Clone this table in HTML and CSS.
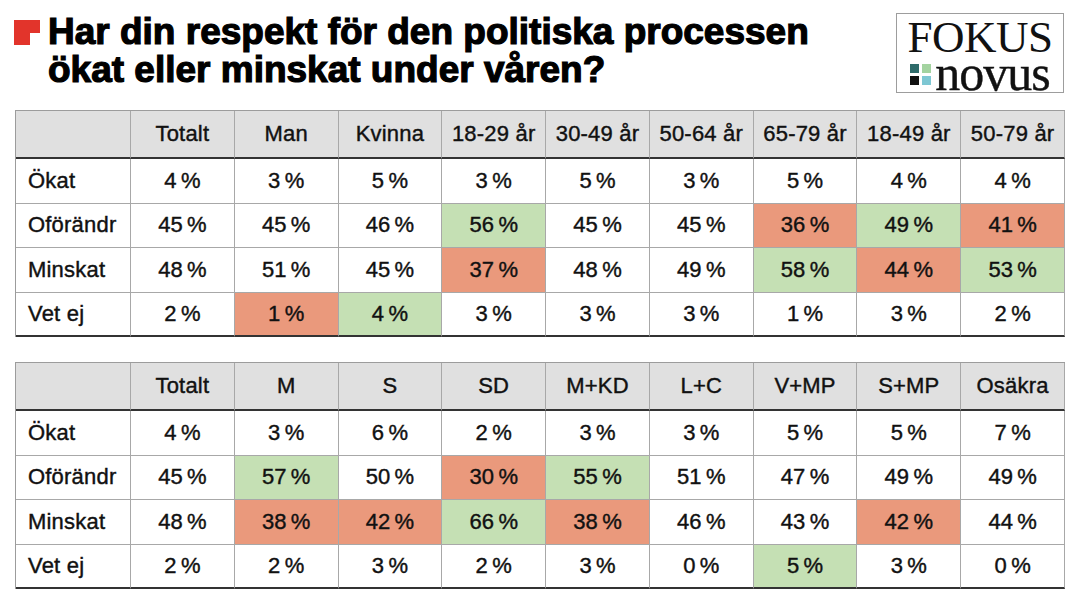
FILE: index.html
```html
<!DOCTYPE html>
<html lang="sv">
<head>
<meta charset="utf-8">
<title>Har din respekt för den politiska processen ökat eller minskat under våren?</title>
<link rel="stylesheet" href="styles.css">
</head>
<body>
<header class="top">
  <div class="mark">
    <svg width="26" height="25" viewBox="0 0 26 25"><path d="M0 0H26V13H16V25H0Z" fill="#e2342b"/></svg>
  </div>
  <h1 class="title">Har din respekt för den politiska processen<br>ökat eller minskat under våren?</h1>
  <div class="logo">
    <div class="logo-fokus">FOKUS</div>
    <div class="logo-novus">
      <span class="squares"><i class="sq sq1"></i><i class="sq sq2"></i><i class="sq sq3"></i><i class="sq sq4"></i></span>
      <span class="novus-text">novus</span>
    </div>
  </div>
</header>

<main class="tables">
  <div class="grid">
    <div class="c h first"></div>
    <div class="c h">Totalt</div>
    <div class="c h">Man</div>
    <div class="c h">Kvinna</div>
    <div class="c h">18-29 år</div>
    <div class="c h">30-49 år</div>
    <div class="c h">50-64 år</div>
    <div class="c h">65-79 år</div>
    <div class="c h">18-49 år</div>
    <div class="c h">50-79 år</div>

    <div class="c first">Ökat</div>
    <div class="c">4&#8239;%</div><div class="c">3&#8239;%</div><div class="c">5&#8239;%</div><div class="c">3&#8239;%</div><div class="c">5&#8239;%</div><div class="c">3&#8239;%</div><div class="c">5&#8239;%</div><div class="c">4&#8239;%</div><div class="c">4&#8239;%</div>

    <div class="c first">Oförändr</div>
    <div class="c">45&#8239;%</div><div class="c">45&#8239;%</div><div class="c">46&#8239;%</div><div class="c g">56&#8239;%</div><div class="c">45&#8239;%</div><div class="c">45&#8239;%</div><div class="c o">36&#8239;%</div><div class="c g">49&#8239;%</div><div class="c o">41&#8239;%</div>

    <div class="c first">Minskat</div>
    <div class="c">48&#8239;%</div><div class="c">51&#8239;%</div><div class="c">45&#8239;%</div><div class="c o">37&#8239;%</div><div class="c">48&#8239;%</div><div class="c">49&#8239;%</div><div class="c g">58&#8239;%</div><div class="c o">44&#8239;%</div><div class="c g">53&#8239;%</div>

    <div class="c first last">Vet ej</div>
    <div class="c last">2&#8239;%</div><div class="c last o">1&#8239;%</div><div class="c last g">4&#8239;%</div><div class="c last">3&#8239;%</div><div class="c last">3&#8239;%</div><div class="c last">3&#8239;%</div><div class="c last">1&#8239;%</div><div class="c last">3&#8239;%</div><div class="c last">2&#8239;%</div>
  </div>

  <div class="grid">
    <div class="c h first"></div>
    <div class="c h">Totalt</div>
    <div class="c h">M</div>
    <div class="c h">S</div>
    <div class="c h">SD</div>
    <div class="c h">M+KD</div>
    <div class="c h">L+C</div>
    <div class="c h">V+MP</div>
    <div class="c h">S+MP</div>
    <div class="c h">Osäkra</div>

    <div class="c first">Ökat</div>
    <div class="c">4&#8239;%</div><div class="c">3&#8239;%</div><div class="c">6&#8239;%</div><div class="c">2&#8239;%</div><div class="c">3&#8239;%</div><div class="c">3&#8239;%</div><div class="c">5&#8239;%</div><div class="c">5&#8239;%</div><div class="c">7&#8239;%</div>

    <div class="c first">Oförändr</div>
    <div class="c">45&#8239;%</div><div class="c g">57&#8239;%</div><div class="c">50&#8239;%</div><div class="c o">30&#8239;%</div><div class="c g">55&#8239;%</div><div class="c">51&#8239;%</div><div class="c">47&#8239;%</div><div class="c">49&#8239;%</div><div class="c">49&#8239;%</div>

    <div class="c first">Minskat</div>
    <div class="c">48&#8239;%</div><div class="c o">38&#8239;%</div><div class="c o">42&#8239;%</div><div class="c g">66&#8239;%</div><div class="c o">38&#8239;%</div><div class="c">46&#8239;%</div><div class="c">43&#8239;%</div><div class="c o">42&#8239;%</div><div class="c">44&#8239;%</div>

    <div class="c first last">Vet ej</div>
    <div class="c last">2&#8239;%</div><div class="c last">2&#8239;%</div><div class="c last">3&#8239;%</div><div class="c last">2&#8239;%</div><div class="c last">3&#8239;%</div><div class="c last">0&#8239;%</div><div class="c last g">5&#8239;%</div><div class="c last">3&#8239;%</div><div class="c last">0&#8239;%</div>
  </div>
</main>
</body>
</html>
```

FILE: styles.css
```css
html, body {
  margin: 0;
  padding: 0;
  background: #ffffff;
}

body {
  width: 1080px;
  height: 605px;
  overflow: hidden;
  font-family: "Liberation Sans", Arial, sans-serif;
  color: #111111;
}

.top {
  box-sizing: border-box;
  height: 110px;
  padding: 13px 16px 0 14px;
  display: flex;
  align-items: flex-start;
}

.mark {
  width: 26px;
  height: 25px;
  margin-top: 7px;
  margin-right: 8px;
  flex: none;
}

.mark svg {
  display: block;
}

.title {
  flex: 1;
  margin: 0 0 0;
  font-family: "Liberation Sans", Arial, sans-serif;
  font-weight: 700;
  font-size: 37px;
  line-height: 38px;
  color: #000000;
  -webkit-text-stroke: 1.2px #000000;
  letter-spacing: 0;
}

.logo {
  flex: none;
  box-sizing: border-box;
  width: 168px;
  height: 80px;
  border: 1.5px solid #9d9d9d;
  display: flex;
  flex-direction: column;
  align-items: center;
}

.logo-fokus {
  font-family: "Liberation Serif", "Times New Roman", serif;
  font-size: 45px;
  line-height: 40px;
  height: 40px;
  margin-top: 3px;
  color: #111111;
  letter-spacing: -0.5px;
}

.logo-novus {
  display: flex;
  align-items: center;
  gap: 4px;
  height: 32px;
}

.squares {
  display: grid;
  grid-template-columns: 9px 9px;
  grid-template-rows: 9px 9px;
  gap: 3px;
  margin-top: 2px;
}

.sq {
  display: block;
}

.sq1 { background: #2e6b6a; }
.sq2 { background: #a3d3a0; }
.sq3 { background: #111111; }
.sq4 { background: #7ec7d3; }

.novus-text {
  font-family: "Liberation Serif", "Times New Roman", serif;
  font-size: 50px;
  line-height: 28px;
  height: 28px;
  color: #111111;
  letter-spacing: -1px;
  -webkit-text-stroke: 0.4px #111111;
}

.tables {
  padding: 0 15px;
  display: flex;
  flex-direction: column;
  gap: 25px;
}

.grid {
  box-sizing: border-box;
  width: 1050px;
  display: grid;
  grid-template-columns: 115px repeat(9, 1fr);
  grid-template-rows: 48px repeat(4, 44.5px);
  border-top: 1px solid #9c9c9c;
  border-left: 1px solid #9c9c9c;
}

.c {
  box-sizing: border-box;
  display: flex;
  align-items: center;
  justify-content: center;
  border-right: 1px solid #a8a8a8;
  border-bottom: 1px solid #a8a8a8;
  font-size: 22px;
  letter-spacing: 0.2px;
  -webkit-text-stroke: 0.4px #111111;
  white-space: nowrap;
}

.c.first {
  justify-content: flex-start;
  padding-left: 12px;
}

.c.h {
  background: #e0e0e0;
  border-bottom: 2px solid #333333;
}

.c.last {
  border-bottom: 2px solid #333333;
}

.c.g {
  background: #c5e0b4;
}

.c.o {
  background: #ea997c;
}
```
